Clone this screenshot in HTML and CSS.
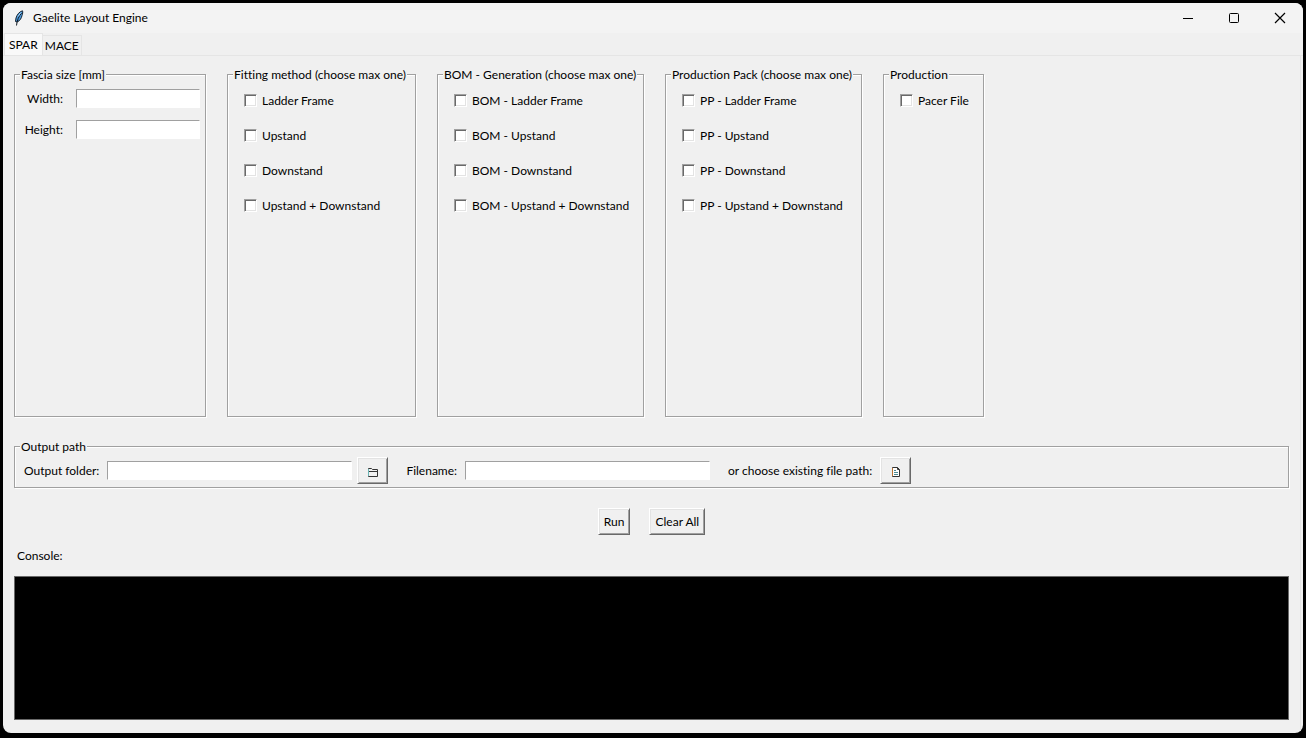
FILE: index.html
```html
<!DOCTYPE html>
<html lang="en">
<head>
    <meta charset="UTF-8">
    <title>Gaelite Layout Engine</title>
    <link rel="stylesheet" href="styles.css">
</head>
<body>
<div class="window">
    <header class="titlebar">
        <svg class="feather" width="12" height="16" viewBox="0 0 12 16">
            <path d="M9.500 .8C6.500 1.500 4 4.500 3 8L2.500 11.500l1.500.5C7 11 8.500 8 9 5.500c.6-1.500 1-3.500.5-4.700z" fill="#4a9be0" stroke="#14202c"/>
            <path d="M8.500 3C6 6 4 10 3.500 15.500" fill="none" stroke="#101820"/>
            <path d="M8 2.500L5 6.500" stroke="#a6d4f5"/>
        </svg>
        <h1>Gaelite Layout Engine</h1>
        <div class="win-buttons">
            <button type="button" aria-label="Minimize"><svg width="12" height="12" viewBox="0 0 12 12"><path d="M1 6.500h10" stroke="#000"/></svg></button>
            <button type="button" aria-label="Maximize"><svg width="12" height="12" viewBox="0 0 12 12"><rect x="1.500" y="1.500" width="9" height="9" rx="1" fill="none" stroke="#000"/></svg></button>
            <button type="button" aria-label="Close"><svg width="12" height="12" viewBox="0 0 12 12"><path d="M1 1l10 10M11 1L1 11" stroke="#000" stroke-width="1.200"/></svg></button>
        </div>
    </header>

    <nav class="tabs">
        <button type="button" class="tab active">SPAR</button>
        <button type="button" class="tab">MACE</button>
    </nav>

    <form class="page">
        <div class="groups">
            <fieldset>
                <legend>Fascia size [mm]</legend>
                <div class="size-rows">
                    <label for="width">Width:</label>
                    <input type="text" id="width">
                    <label for="height">Height:</label>
                    <input type="text" id="height">
                </div>
            </fieldset>

            <fieldset>
                <legend>Fitting method (choose max one)</legend>
                <div class="checks">
                    <label><input type="checkbox"> Ladder Frame</label>
                    <label><input type="checkbox"> Upstand</label>
                    <label><input type="checkbox"> Downstand</label>
                    <label><input type="checkbox"> Upstand + Downstand</label>
                </div>
            </fieldset>

            <fieldset>
                <legend>BOM - Generation (choose max one)</legend>
                <div class="checks">
                    <label><input type="checkbox"> BOM - Ladder Frame</label>
                    <label><input type="checkbox"> BOM - Upstand</label>
                    <label><input type="checkbox"> BOM - Downstand</label>
                    <label><input type="checkbox"> BOM - Upstand + Downstand</label>
                </div>
            </fieldset>

            <fieldset>
                <legend>Production Pack (choose max one)</legend>
                <div class="checks">
                    <label><input type="checkbox"> PP - Ladder Frame</label>
                    <label><input type="checkbox"> PP - Upstand</label>
                    <label><input type="checkbox"> PP - Downstand</label>
                    <label><input type="checkbox"> PP - Upstand + Downstand</label>
                </div>
            </fieldset>

            <fieldset>
                <legend>Production</legend>
                <div class="checks">
                    <label><input type="checkbox"> Pacer File</label>
                </div>
            </fieldset>
        </div>

        <fieldset class="output">
            <legend>Output path</legend>
            <div class="output-row">
                <div class="field folder">
                    <label for="folder">Output folder:</label>
                    <input type="text" id="folder">
                    <button type="button" class="btn icon" aria-label="Choose folder">
                        <svg width="12" height="12" viewBox="0 0 12 12"><path d="M1.500 10.500v-8h3l1 1h5v7z" fill="none" stroke="#333"/><path d="M2 5.500h8.500" stroke="#333"/><path d="M1.500 3v7" stroke="#6bb5b5"/></svg>
                    </button>
                </div>
                <div class="field">
                    <label for="filename">Filename:</label>
                    <input type="text" id="filename">
                </div>
                <div class="field">
                    <span>or choose existing file path:</span>
                    <button type="button" class="btn icon" aria-label="Choose file">
                        <svg width="12" height="12" viewBox="0 0 12 12"><path d="M2.500 1.500h5l2 2v7h-7z" fill="#fff" stroke="#333"/><path d="M2.500 2v8" stroke="#b87333"/><path d="M7.500 1.500v2h2" fill="none" stroke="#333"/><path d="M4 4.500h2M4 6.500h4M4 8.500h4" stroke="#4c8a92"/></svg>
                    </button>
                </div>
            </div>
        </fieldset>

        <div class="actions">
            <button type="button" class="btn">Run</button>
            <button type="reset" class="btn">Clear All</button>
        </div>

        <label class="console-label" for="console">Console:</label>
        <textarea class="console" id="console" readonly></textarea>
    </form>
</div>
</body>
</html>
```

FILE: styles.css
```css
* {
    box-sizing: border-box;
}
body {
    margin: 0;
    padding: 3px 3px 5px;
    min-height: 100vh;
    display: flex;
    background: #000;
    color: #000;
    font: 12px/16px Lato, "Open Sans", sans-serif;
    font-variant-ligatures: none;
}
button, input, textarea {
    font: inherit;
    color: inherit;
}
.window {
    flex: 1;
    display: flex;
    flex-direction: column;
    background: #f0f0f0;
    border-radius: 8px;
    overflow: hidden;
}

/* title bar */
.titlebar {
    display: flex;
    align-items: center;
    height: 30px;
    padding-left: 10px;
    background: #f3f3f3;
}
.titlebar h1 {
    flex: 1;
    margin: 0 0 0 8px;
    font-size: 12px;
    font-weight: normal;
}
.win-buttons {
    display: flex;
}
.win-buttons button {
    display: flex;
    align-items: center;
    justify-content: center;
    width: 46px;
    height: 28px;
    padding: 0;
    border: 0;
    background: none;
}

/* tabs */
.tabs {
    display: flex;
    align-items: flex-end;
    height: 23px;
    padding-left: 1px;
    border-bottom: 1px solid #e5e5e5;
}
.tab {
    height: 20px;
    padding: 1px 2px 0;
    border: 1px solid #e5e5e5;
    border-width: 1px 1px 0 0;
    background: #f0f0f0;
}
.tab.active {
    height: 22px;
    padding: 0 4px;
    border-left-width: 1px;
    background: #f9f9f9;
}

/* page */
.page {
    flex: 1;
    display: flex;
    flex-direction: column;
    margin-right: 2px;
    padding: 11px 11px 13px;
    border-right: 1px solid #e5e5e5;
}
fieldset {
    margin: 0;
    padding: 0 5px;
    min-width: 0;
    border: 1px solid #a0a0a0;
    box-shadow: 1px 1px 0 #fff, inset 1px 1px 0 #fff;
}
legend {
    padding: 0 1px;
    line-height: 15px;
    white-space: nowrap;
    background: #f0f0f0;
}
.groups {
    display: grid;
    grid-template-columns: 192px 189px 207px 197px 101px;
    gap: 21px;
    height: 350px;
}
input[type="text"] {
    height: 19px;
    padding: 0 2px;
    border: 1px solid #a0a0a0;
    border-right-color: #fff;
    border-bottom-color: #fff;
    background: #fff;
}
.size-rows {
    display: grid;
    grid-template-columns: 43px 124px;
    justify-content: space-between;
    align-items: center;
    row-gap: 12px;
    padding-top: 7px;
    text-align: right;
}
.size-rows input {
    width: 100%;
}
.checks {
    display: flex;
    flex-direction: column;
    gap: 19px;
    padding: 11px 0 0 11px;
}
.checks label {
    display: flex;
    align-items: flex-start;
    gap: 5px;
    white-space: nowrap;
}
input[type="checkbox"] {
    appearance: none;
    flex-shrink: 0;
    width: 13px;
    height: 13px;
    margin: 1px 0 0;
    border: 1px solid #a0a0a0;
    border-right-color: #fff;
    border-bottom-color: #fff;
    background: #fff;
    box-shadow: inset 1px 1px 0 #696969, inset -1px -1px 0 #e3e3e3;
}

.output {
    margin-top: 22px;
}
.output-row {
    display: flex;
    gap: 18px;
    padding: 3px 4px;
}
.field {
    display: flex;
    align-items: center;
    gap: 8px;
    white-space: nowrap;
}
.field input {
    width: 245px;
}
.folder .btn {
    margin-left: -3px;
}

.btn {
    height: 27px;
    padding: 0 4px;
    border: 1px solid #fff;
    border-right-color: #696969;
    border-bottom-color: #696969;
    background: #f0f0f0;
    box-shadow: inset 1px 1px 0 #e3e3e3, inset -1px -1px 0 #a0a0a0;
}
.btn.icon {
    display: flex;
    align-items: center;
    justify-content: center;
    width: 31px;
    padding: 3px 0 0;
}
.actions {
    display: flex;
    justify-content: center;
    gap: 19px;
    margin-top: 20px;
}
.actions .btn {
    padding: 0 5px;
}
.console-label {
    margin: 13px 0 12px 3px;
}
.console {
    flex: 1;
    width: 100%;
    min-height: 80px;
    padding: 2px;
    border: 1px solid #696969;
    background: #000;
    color: #fff;
    resize: none;
}
```
